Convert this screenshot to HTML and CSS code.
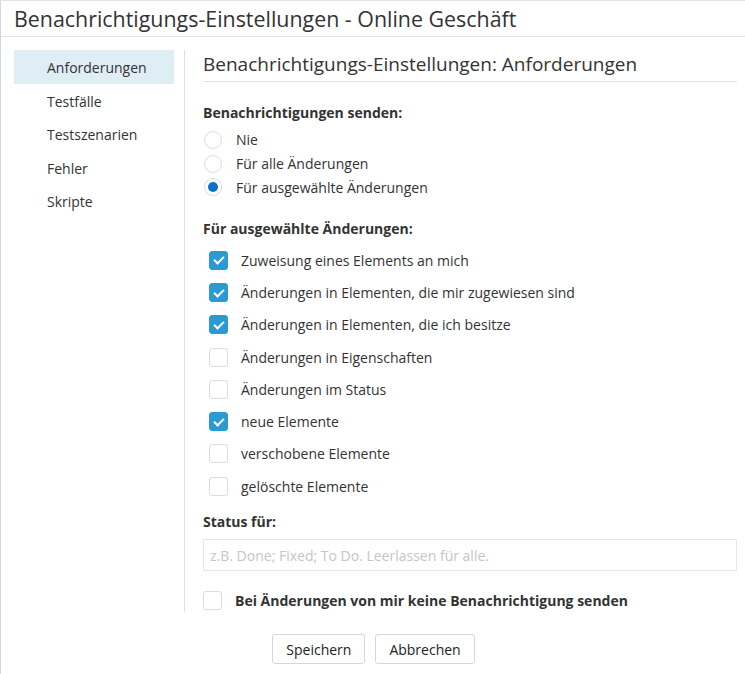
FILE: index.html
```html
<!DOCTYPE html>
<html lang="de">
<head>
    <meta charset="UTF-8">
    <title>Benachrichtigungs-Einstellungen</title>
    <link rel="stylesheet" href="styles.css">
</head>
<body>
    <div class="dialog">
        <div class="dialog-header">Benachrichtigungs-Einstellungen - Online Geschäft</div>
        <div class="dialog-body">
            <ul class="side-nav">
                <li class="active">Anforderungen</li>
                <li>Testfälle</li>
                <li>Testszenarien</li>
                <li>Fehler</li>
                <li>Skripte</li>
            </ul>
            <div class="content">
                <h2 class="content-title">Benachrichtigungs-Einstellungen: Anforderungen</h2>

                <div class="group-label">Benachrichtigungen senden:</div>
                <div class="radio-list">
                    <label class="radio"><span class="radio-dot"></span>Nie</label>
                    <label class="radio"><span class="radio-dot"></span>Für alle Änderungen</label>
                    <label class="radio checked"><span class="radio-dot"></span>Für ausgewählte Änderungen</label>
                </div>

                <div class="group-label second">Für ausgewählte Änderungen:</div>
                <div class="check-list">
                    <label class="check checked"><span class="box"></span>Zuweisung eines Elements an mich</label>
                    <label class="check checked"><span class="box"></span>Änderungen in Elementen, die mir zugewiesen sind</label>
                    <label class="check checked"><span class="box"></span>Änderungen in Elementen, die ich besitze</label>
                    <label class="check"><span class="box"></span>Änderungen in Eigenschaften</label>
                    <label class="check"><span class="box"></span>Änderungen im Status</label>
                    <label class="check checked"><span class="box"></span>neue Elemente</label>
                    <label class="check"><span class="box"></span>verschobene Elemente</label>
                    <label class="check"><span class="box"></span>gelöschte Elemente</label>
                </div>

                <div class="group-label third">Status für:</div>
                <input class="status-input" type="text" placeholder="z.B. Done; Fixed; To Do. Leerlassen für alle.">

                <label class="check own"><span class="box"></span>Bei Änderungen von mir keine Benachrichtigung senden</label>
            </div>
        </div>
        <div class="dialog-footer">
            <button class="btn">Speichern</button>
            <button class="btn">Abbrechen</button>
        </div>
    </div>
</body>
</html>
```

FILE: styles.css
```css
body {
    margin: 0;
    font-family: "Open Sans", Arial, sans-serif;
    color: #333;
    background: #fff;
}

.dialog {
    width: 760px;
    height: 700px;
    border-left: 1px solid #d6d6d6;
    border-top: 1px solid #e4e4e4;
    box-sizing: border-box;
}

.dialog-header {
    height: 35px;
    line-height: 35px;
    padding-left: 13px;
    font-size: 21.4px;
    border-bottom: 1px solid #e2e2e2;
}

.dialog-body {
    display: flex;
    align-items: flex-start;
    height: 575px;
    box-sizing: border-box;
    padding: 13px 0 0 13px;
}

.side-nav {
    list-style: none;
    margin: 0;
    padding: 0 10px 0 0;
    width: 160px;
    border-right: 1px solid #e0e0e0;
    height: 562px;
}

.side-nav li {
    height: 33.5px;
    line-height: 35px;
    padding-left: 33px;
    font-size: 14px;
}

.side-nav li.active {
    background: #dfedf5;
}

.content {
    width: 534px;
    padding-left: 18px;
}

.content-title {
    margin: 0;
    font-size: 19px;
    font-weight: normal;
    height: 31px;
    line-height: 28px;
    border-bottom: 1px solid #e2e2e2;
}

.group-label {
    font-size: 14px;
    font-weight: bold;
    margin-top: 21px;
    margin-bottom: 6px;
}

.group-label.second {
    margin-top: 20px;
    margin-bottom: 6px;
}

.group-label.third {
    margin-top: 10px;
    margin-bottom: 8px;
}

.radio-list {
    display: flex;
    flex-direction: column;
}

.radio {
    display: flex;
    align-items: center;
    height: 23.7px;
    font-size: 14px;
}

.radio-dot {
    width: 18px;
    height: 18px;
    border: 1px solid #dcdcdc;
    border-radius: 50%;
    margin: 0 14px 0 1px;
    box-sizing: border-box;
    display: flex;
    align-items: center;
    justify-content: center;
}

.radio.checked .radio-dot::after {
    content: "";
    width: 10px;
    height: 10px;
    border-radius: 50%;
    background: #0a6fcf;
}

.check-list {
    display: flex;
    flex-direction: column;
}

.check {
    display: flex;
    align-items: center;
    height: 32.3px;
    font-size: 14px;
    padding-left: 6px;
}

.box {
    width: 19px;
    height: 19px;
    border: 1px solid #dcdcdc;
    border-radius: 3px;
    box-sizing: border-box;
    margin-right: 13px;
    position: relative;
}

.check.checked .box {
    background: #2a9ad4;
    border-color: #2a9ad4;
}

.check.checked .box::after {
    content: "";
    position: absolute;
    left: 5.5px;
    top: 2.5px;
    width: 4px;
    height: 8px;
    border: solid #fff;
    border-width: 0 2.5px 2.5px 0;
    transform: rotate(45deg);
}

.status-input {
    display: block;
    width: 534px;
    height: 32px;
    box-sizing: border-box;
    border: 1px solid #e6e6e6;
    padding: 0 6px;
    font-family: inherit;
    font-size: 14px;
    outline: none;
}

.status-input::placeholder {
    color: #c6c6c6;
}

.check.own {
    padding-left: 0;
    margin-top: 13px;
    font-weight: bold;
}

.dialog-footer {
    display: flex;
    justify-content: center;
    gap: 10px;
    width: 745px;
    margin-top: 22px;
}

.btn {
    height: 30px;
    padding: 0 13px;
    background: #fff;
    border: 1px solid #d6d6d6;
    border-radius: 3px;
    font-family: inherit;
    font-size: 14px;
    color: #222;
}
```
